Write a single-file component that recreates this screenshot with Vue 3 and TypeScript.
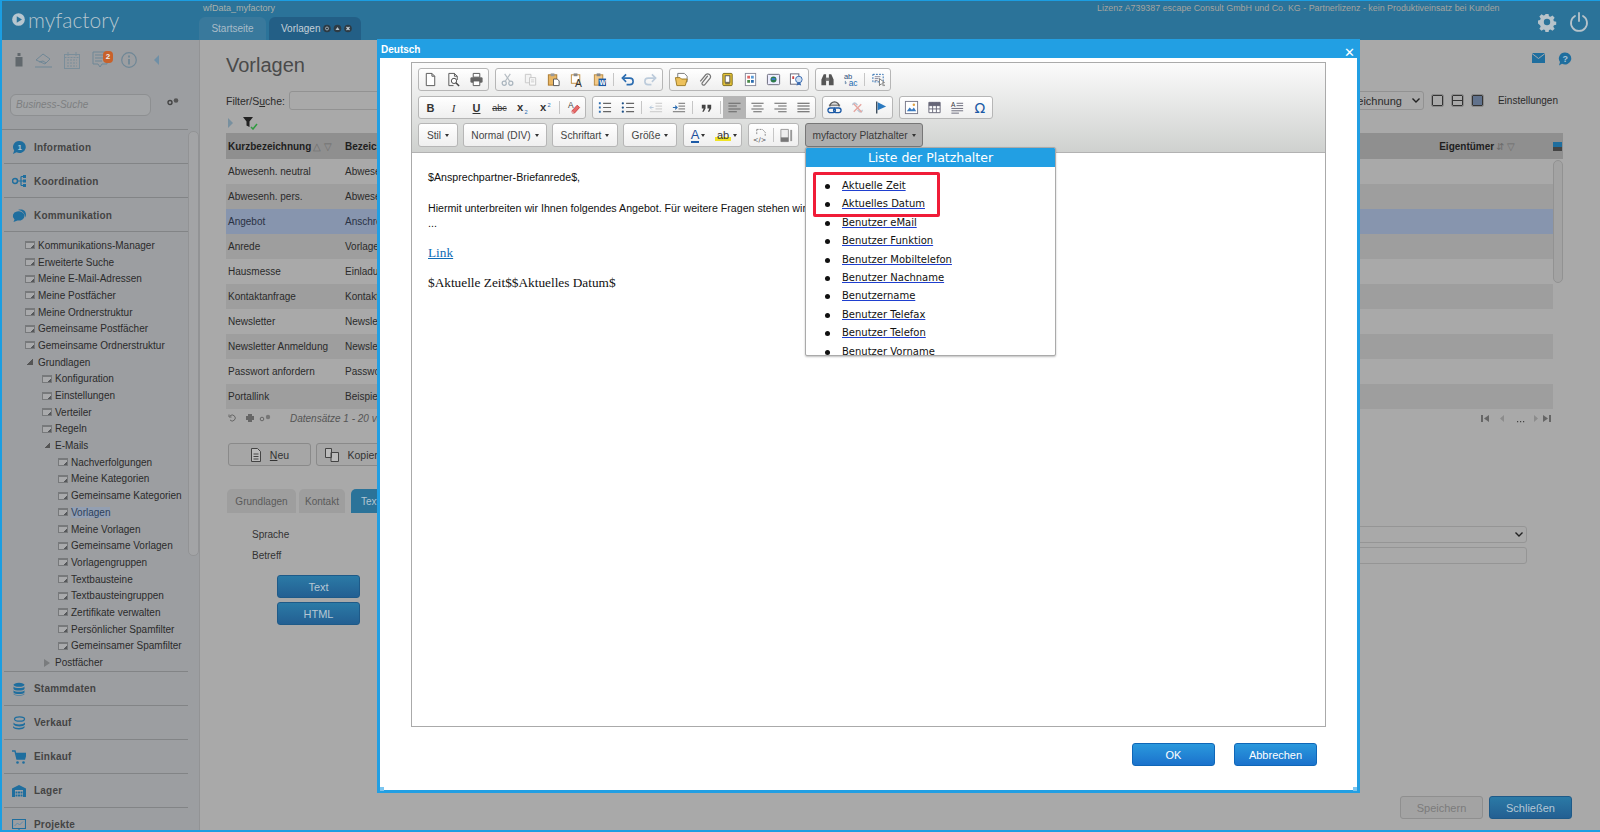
<script setup lang="ts">
type TreeItem = { label: string; level: number; kind?: "open" | "closed"; active?: boolean };

const sectionIcons: Record<string, string> = {
  Information: '<path d="M7.500 1a6.300 6 0 1 1-3 11.300L1 14l1.200-3.500A6 6 0 0 1 7.500 1z" fill="#1f6e9e"/><text x="5.500" y="10" font-size="8" font-family="Liberation Sans" fill="#a9c4d6">1</text>',
  Koordination: '<circle cx="3" cy="7" r="2.500" fill="none" stroke="#1f6e9e" stroke-width="1.500"/><path d="M5.500 7H9M9 2.500v9M9 2.500h2M9 7h2M9 11.500h2" stroke="#1f6e9e" stroke-width="1.200"/><path d="M11 1h3v3h-3zM11 5.500h3v3h-3zM11 10h3v3h-3z" fill="#1f6e9e"/>',
  Kommunikation: '<path d="M5 3.500a6 4.600 0 1 1 .5 9L1.500 14l1-2.500A5 4.600 0 0 1 5 3.500z" fill="#1f6e9e"/><path d="M6 2c4-1.500 8 .500 8 4.500 0 1-.3 2-1 3 .2-4-3-7-7-7.500z" fill="#1f6e9e"/>',
  Stammdaten: '<ellipse cx="7" cy="2.800" rx="5.500" ry="2" fill="#1f6e9e"/><path d="M1.500 4.500c1 2 10 2 11 0V7c-1 2-10 2-11 0zM1.500 8.200c1 2 10 2 11 0v2.300c-1 2-10 2-11 0zM1.500 11.500c1 2 10 2 11 0v.500c-1 2-10 2-11 0z" fill="#1f6e9e"/>',
  Verkauf: '<ellipse cx="7.500" cy="3" rx="5" ry="2.200" fill="none" stroke="#1f6e9e" stroke-width="1.300"/><path d="M1.500 6.500c1 2.500 10 2.500 11.500 0v2c-1 2.500-10 2.500-11.500 0zM1 10c1 2.500 10 2.500 11.500 0v1.500c-1 2.500-10 2.500-11.500 0z" fill="#1f6e9e"/>',
  Einkauf: '<path d="M0 1h3l2 8h7.500L14 3.500H4" fill="none" stroke="#1f6e9e" stroke-width="1.400"/><path d="M4 3.500h10l-1.500 5.500H5z" fill="#1f6e9e"/><circle cx="5.500" cy="12.500" r="1.300" fill="#1f6e9e"/><circle cx="11.500" cy="12.500" r="1.300" fill="#1f6e9e"/>',
  Lager: '<path d="M0 4.500L7 1l7 3.500V13H0z" fill="#1f6e9e"/><path d="M3 6h8v7H3z" fill="#a0a2a5"/><path d="M3.500 7.500h2v2h-2zM6 7.500h2v2H6zM8.500 7.500h2v2h-2zM3.500 10.500h2v2h-2zM6 10.500h2v2H6zM8.500 10.500h2v2h-2z" fill="#1f6e9e"/>',
  Projekte: '<path d="M.5 1.500h13v9H.5zM7 10.500v2.500M4.500 13.500h5" fill="none" stroke="#1f6e9e" stroke-width="1.100"/><path d="M2.500 8l3-3 2 2 3.500-3.500" fill="none" stroke="#5c8cad"/>',
};

const topSections = ["Information", "Koordination", "Kommunikation"];
const bottomSections = ["Stammdaten", "Verkauf", "Einkauf", "Lager", "Projekte"];

const tree: TreeItem[] = [
  { label: "Kommunikations-Manager", level: 1 },
  { label: "Erweiterte Suche", level: 1 },
  { label: "Meine E-Mail-Adressen", level: 1 },
  { label: "Meine Postfächer", level: 1 },
  { label: "Meine Ordnerstruktur", level: 1 },
  { label: "Gemeinsame Postfächer", level: 1 },
  { label: "Gemeinsame Ordnerstruktur", level: 1 },
  { label: "Grundlagen", level: 1, kind: "open" },
  { label: "Konfiguration", level: 2 },
  { label: "Einstellungen", level: 2 },
  { label: "Verteiler", level: 2 },
  { label: "Regeln", level: 2 },
  { label: "E-Mails", level: 2, kind: "open" },
  { label: "Nachverfolgungen", level: 3 },
  { label: "Meine Kategorien", level: 3 },
  { label: "Gemeinsame Kategorien", level: 3 },
  { label: "Vorlagen", level: 3, active: true },
  { label: "Meine Vorlagen", level: 3 },
  { label: "Gemeinsame Vorlagen", level: 3 },
  { label: "Vorlagengruppen", level: 3 },
  { label: "Textbausteine", level: 3 },
  { label: "Textbausteingruppen", level: 3 },
  { label: "Zertifikate verwalten", level: 3 },
  { label: "Persönlicher Spamfilter", level: 3 },
  { label: "Gemeinsamer Spamfilter", level: 3 },
  { label: "Postfächer", level: 2, kind: "closed" },
];

const rows = [
  ["Abwesenh. neutral", "Abwesenheit neutral"],
  ["Abwesenh. pers.", "Abwesenheit persönlich"],
  ["Angebot", "Anschreiben Angebot"],
  ["Anrede", "Vorlage Anrede"],
  ["Hausmesse", "Einladung Hausmesse"],
  ["Kontaktanfrage", "Kontaktanfrage"],
  ["Newsletter", "Newsletter"],
  ["Newsletter Anmeldung", "Newsletter Anmeldung"],
  ["Passwort anfordern", "Passwort anfordern"],
  ["Portallink", "Beispiel Portallink"],
];

const placeholders = [
  "Aktuelle Zeit",
  "Aktuelles Datum",
  "Benutzer eMail",
  "Benutzer Funktion",
  "Benutzer Mobiltelefon",
  "Benutzer Nachname",
  "Benutzername",
  "Benutzer Telefax",
  "Benutzer Telefon",
  "Benutzer Vorname",
];

// "|" is a separator, "=x" a text button, everything else an icon name
const toolbarRows: string[][][] = [
  [
    ["doc", "preview", "print"],
    ["cut", "copy", "paste", "pasteText", "pasteWord", "|", "undo", "redo"],
    ["template", "clip", "frame", "form", "image2", "seal"],
    ["find", "replace", "|", "select"],
  ],
  [
    ["=B", "=I", "=U", "=abc", "sub", "sup", "|", "eraser"],
    ["ol", "ul", "|", "outdent", "indent", "|", "quote", "|", "left", "center", "right", "justify"],
    ["link", "unlink", "flag"],
    ["picture", "table", "lines", "omega"],
  ],
];

const combos = [
  { label: "Stil", width: 40 },
  { label: "Normal (DIV)", width: 84 },
  { label: "Schriftart", width: 66 },
  { label: "Größe", width: 54 },
];

const icons: Record<string, string> = {
  doc: '<path d="M3.500 1.500h6l3 3v10h-9z M9.500 1.500v3h3" fill="#fff" stroke="#555"/>',
  preview: '<path d="M3 1.500h6l3 3v4M3 1.500v13h5M9 1.500v3h3" fill="none" stroke="#555"/><circle cx="8.500" cy="9.500" r="2.800" fill="#fff" stroke="#444"/><path d="M10.500 11.500l3.500 3.500" stroke="#444" stroke-width="1.600"/>',
  print: '<path d="M4.500 1.500h7v4h-7z" fill="#fff" stroke="#555"/><rect x="1.500" y="5.500" width="13" height="6" rx="1.500" fill="#666"/><path d="M4.500 9.500h7v5h-7z" fill="#fff" stroke="#555"/>',
  cut: '<circle cx="4.500" cy="12" r="2.200" fill="none" stroke="#a9b4bd" stroke-width="1.300"/><circle cx="11.500" cy="12" r="2.200" fill="none" stroke="#a9b4bd" stroke-width="1.300"/><path d="M5.500 10L11 2M10.500 10L5 2" stroke="#b5bcc2" stroke-width="1.200"/>',
  copy: '<path d="M2.500 2.500h6v9h-6z" fill="#f4f4f4" stroke="#c8c8c8"/><path d="M7 6h6.500v8H7z" fill="#fafafa" stroke="#c4c4c4"/><path d="M8.500 8.500h3.500M8.500 10.500h3.500" stroke="#ccc"/>',
  paste: '<rect x="2.500" y="3" width="9" height="11" fill="#e8b563" stroke="#a9772c"/><rect x="5" y="1.500" width="4" height="3" fill="#999"/><path d="M8 7.500h4l2 2v5H8z" fill="#fff" stroke="#555"/>',
  pasteText: '<rect x="2.500" y="3" width="9" height="9" fill="#fff" stroke="#c08b3b"/><rect x="5" y="1.500" width="4" height="3" fill="#888"/><text x="6.500" y="15.500" font-size="11" font-family="Liberation Sans" fill="#333">A</text>',
  pasteWord: '<rect x="2.500" y="3" width="9" height="11" fill="#f3c987" stroke="#b8893f"/><rect x="5" y="1.500" width="4" height="3" fill="#888"/><rect x="7" y="7" width="8" height="8" fill="#1c5aa6"/><text x="8" y="14" font-size="7" font-weight="700" font-family="Liberation Sans" fill="#fff">W</text>',
  undo: '<path d="M3.500 6.500h7a3.500 3.500 0 0 1 0 7H7" fill="none" stroke="#2b6cb0" stroke-width="1.700"/><path d="M6.500 2.500L2.500 6.500l4 4" fill="none" stroke="#2b6cb0" stroke-width="1.700"/>',
  redo: '<path d="M12.500 6.500h-7a3.500 3.500 0 0 0 0 7H9" fill="none" stroke="#bccbdb" stroke-width="1.700"/><path d="M9.500 2.500l4 4-4 4" fill="none" stroke="#bccbdb" stroke-width="1.700"/>',
  template: '<path d="M4 1.500h7l3 3v6H4z" fill="#fff" stroke="#777"/><path d="M1.500 6h5l1.500 1.500h6L12 14.500H3z" fill="#edc15c" stroke="#9c7a22"/>',
  clip: '<path d="M11.500 4L5.500 11.500a1.800 1.800 0 0 0 2.700 2.200L14 6.500a3 3 0 0 0-4.500-3.800L3.500 10" fill="none" stroke="#777" stroke-width="1.300"/>',
  frame: '<rect x="3" y="1.500" width="10" height="13" rx="1" fill="#e6c335" stroke="#7a6a1a"/><rect x="5.500" y="4" width="5" height="7" fill="#fff" stroke="#555"/><path d="M5.500 12.500h5" stroke="#555"/>',
  form: '<rect x="2.500" y="1.500" width="11" height="13" fill="#fff" stroke="#889"/><path d="M4.500 4h3v3h-3z" fill="#d66"/><path d="M8.500 4h3v3h-3z" fill="#5a9ad6"/><path d="M4.500 8.500h3v3h-3z" fill="#4a8a4a"/><path d="M8.500 8.500h3v3h-3z" fill="#2b6cb0"/>',
  image2: '<rect x="1.500" y="2.500" width="13" height="11" rx="1" fill="#eef" stroke="#667"/><circle cx="8" cy="8" r="3.200" fill="#2d7a4a"/><path d="M6 7.500h4" stroke="#3a7ad0" stroke-width="2"/>',
  seal: '<rect x="1.500" y="2" width="9" height="11" fill="#fff" stroke="#667"/><path d="M3.500 4.500h2v3h-2z" fill="#c44"/><circle cx="10.500" cy="8" r="3.500" fill="#cfe0f2" stroke="#3a6ab0"/><path d="M9 11l-1 3.500 2.500-1 2.500 1-1-3.500" fill="#3a6ab0"/>',
  find: '<path d="M1.500 14V8L4 2.500h2.500V14zM14.500 14V8L12 2.500H9.500V14z" fill="#555"/><path d="M6 6h4v3.500H6z" fill="#777"/>',
  replace: '<text x="1" y="7.500" font-size="8" font-family="Liberation Sans" fill="#2b4d7a">ab</text><text x="6" y="15" font-size="9" font-family="Liberation Sans" fill="#1c6ab0">ac</text><path d="M2.500 9.500v3l1.500-1" fill="none" stroke="#68a"/>',
  select: '<path d="M2 2.500h11v8H2z" fill="none" stroke="#2b6cb0" stroke-dasharray="2 1.300"/><path d="M4 5h6M4 7h4M4 9h3" stroke="#889"/><path d="M9 7l0 7.500 2-2 2.500 2.500 1-1-2.500-2.300 2.300-.5z" fill="#fff" stroke="#555" stroke-width=".8"/>',
  sub: '<text x="2" y="12" font-size="12" font-weight="700" font-family="Liberation Sans" fill="#333">x</text><text x="10" y="15" font-size="6" font-family="Liberation Sans" fill="#2b6cb0">2</text>',
  sup: '<text x="2" y="12" font-size="12" font-weight="700" font-family="Liberation Sans" fill="#333">x</text><text x="10" y="7" font-size="6" font-family="Liberation Sans" fill="#2b6cb0">2</text>',
  eraser: '<text x="2" y="8" font-size="9" font-family="Liberation Sans" fill="#444">A</text><path d="M6 12l6-6.500 2.500 2.500-5.500 6H7z" fill="#e66a6a" stroke="#c44"/><path d="M6 12l2.500 2.500" stroke="#eee"/>',
  ol: '<path d="M6.500 3.500H15M6.500 8H15M6.500 12.500H15" stroke="#666" stroke-width="1.300"/><path d="M2 2.500h2v2H2zM2 7h2v2H2zM2 11.500h2v2H2z" fill="#2b6cb0"/>',
  ul: '<path d="M6.500 3.500H15M6.500 8H15M6.500 12.500H15" stroke="#666" stroke-width="1.300"/><circle cx="3" cy="3.500" r="1.200" fill="#1c4f86"/><circle cx="3" cy="8" r="1.200" fill="#1c4f86"/><circle cx="3" cy="12.500" r="1.200" fill="#1c4f86"/>',
  outdent: '<path d="M8 3.500h7M8 6.500h7M8 9.500h7M2 12.500h13" stroke="#c5c5c5"/><path d="M6 8H2m2-2L2 8l2 2" fill="none" stroke="#b4c6da"/>',
  indent: '<path d="M8 3.500h7M8 6.500h7M8 9.500h7M2 12.500h13" stroke="#666"/><path d="M2 8h4M4.500 6L6.500 8l-2 2" fill="none" stroke="#2b6cb0" stroke-width="1.200"/>',
  quote: '<path d="M3 5h4v4l-2 3.500H3.500L5 9H3zM9 5h4v4l-2 3.500H9.500L11 9H9z" fill="#444"/>',
  left: '<path d="M1.500 3.500h13M1.500 6.500h9M1.500 9.500h13M1.500 12.500h9" stroke="#666" stroke-width="1.100"/>',
  center: '<path d="M1.500 3.500h13M3.500 6.500h9M1.500 9.500h13M3.500 12.500h9" stroke="#666" stroke-width="1.100"/>',
  right: '<path d="M1.500 3.500h13M5.500 6.500h9M1.500 9.500h13M5.500 12.500h9" stroke="#666" stroke-width="1.100"/>',
  justify: '<path d="M1.500 3.500h13M1.500 6.500h13M1.500 9.500h13M1.500 12.500h13" stroke="#555" stroke-width="1.100"/>',
  link: '<path d="M3 7a5 5 0 0 1 10 0" fill="#ddd" stroke="#555" stroke-width="1.200"/><path d="M2 5.500h12" stroke="#555"/><path d="M3.500 8.500h3a2.500 2.500 0 0 1 0 5h-3a2.500 2.500 0 0 1 0-5zM9.500 8.500h3a2.500 2.500 0 0 1 0 5h-3a2.500 2.500 0 0 1 0-5z" fill="none" stroke="#1c5aa6" stroke-width="1.400"/>',
  unlink: '<path d="M3 5.500a2 2 0 0 1 3-2l2 2M13 10.500a2 2 0 0 1-3 2l-2-2" fill="none" stroke="#b8c6d6" stroke-width="1.500"/><path d="M4 4l8.500 9M12 4.500l-8 8" stroke="#e6a6a0" stroke-width="1.500"/>',
  flag: '<path d="M4 1.500v13" stroke="#234" stroke-width="1.300"/><path d="M5 2.500l9 4.500-9 4z" fill="#2b7ac0"/>',
  picture: '<rect x="1.500" y="1.500" width="13" height="13" fill="#fff" stroke="#778"/><path d="M3 12l3-4 2.500 2.500L10.500 8l2.500 4z" fill="#3a7ac0"/><circle cx="10.500" cy="5" r="1.300" fill="#e0a040"/>',
  table: '<path d="M2 2.500h12v11H2zM2 6h12M2 9.500h12M6 2.500v11M10 2.500v11" fill="#fff" stroke="#667"/><path d="M2 2.500h12V6H2z" fill="#667"/>',
  lines: '<text x="1" y="7" font-size="7" font-family="Liberation Sans" fill="#333">A</text><path d="M7 3.500h7M7 6h7M1.500 9h12.500M1.500 11.500h12.500M1.500 14h8" stroke="#667"/>',
  omega: '<text x="1.500" y="14" font-size="15" font-family="DejaVu Sans" fill="#1c5aa6">Ω</text>',
};
</script>

<template>
  <div class="app">
    <header class="topbar">
      <div class="logo">
        <svg width="13" height="13" viewBox="0 0 15 15"><circle cx="7.500" cy="7.500" r="7.300" fill="#b7c6cf" /><path d="M5.500 3.800l6 3.700-6 3.700z" fill="#2b7399" /></svg>
        <span>myfactory</span>
      </div>
      <div class="top-center">
        <div class="db-name">wfData_myfactory</div>
        <div class="tabs">
          <div class="tab">Startseite</div>
          <div class="tab current">
            Vorlagen
            <svg width="29" height="9" viewBox="0 0 29 9">
              <circle cx="4" cy="4.500" r="3.800" fill="#2e3b44" /><path d="M2.500 4.500a1.500 1.500 0 0 1 3 0M5.500 4.500a1.500 1.500 0 0 1-3 0" fill="none" stroke="#b9c4cb" stroke-width=".8" />
              <circle cx="14.500" cy="4.500" r="3.800" fill="#2e3b44" /><path d="M12.500 6l2-3 2 3z" fill="#b9c4cb" />
              <circle cx="25" cy="4.500" r="3.800" fill="#2e3b44" /><path d="M23.500 3l3 3M26.500 3l-3 3" stroke="#c6d0d6" stroke-width="1.100" />
            </svg>
          </div>
        </div>
      </div>
      <div class="licence">Lizenz A739387 escape Consult GmbH und Co. KG - Partnerlizenz - kein Produktiveinsatz bei Kunden</div>
      <div class="top-actions">
        <svg width="20" height="20" viewBox="0 0 20 20"><path d="M8.300 1h3.400l.5 2.600 1.700.7 2.200-1.500 2.400 2.400-1.500 2.200.7 1.700 2.600.5-.1 3.400-2.500.5-.7 1.700 1.500 2.200-2.400 2.400-2.200-1.500-1.700.7-.5 2.600H8.300l-.5-2.600-1.700-.7-2.200 1.500-2.400-2.400 1.500-2.200-.7-1.700L0 11.600V8.200l2.300-.5.700-1.700-1.500-2.200 2.400-2.400 2.200 1.500 1.700-.7z" transform="translate(1 1) scale(.9)" fill="#b7c3ca" /><circle cx="10" cy="10" r="3.200" fill="#2b7399" /></svg>
        <svg width="20" height="20" viewBox="0 0 20 20"><path d="M6 4a8 8 0 1 0 8 0M10 1v8" fill="none" stroke="#b7c3ca" stroke-width="1.800" stroke-linecap="round" /></svg>
      </div>
    </header>

    <div class="page">
      <aside class="sidebar">
        <div class="quick">
          <svg width="8" height="14" viewBox="0 0 8 14"><path d="M2.500 0h3v3h-3zM.5 4h7v9.500h-7z" fill="#61686d" /></svg>
          <svg width="17" height="16" viewBox="0 0 17 16"><path d="M1 8l7-6 7 5-5 5zM4 10l4-1 3 2M0 15h17" fill="none" stroke="#6f8796" /></svg>
          <svg width="16" height="17" viewBox="0 0 16 17"><rect x=".5" y="2.500" width="15" height="14" fill="none" stroke="#7b8e9a" /><path d="M.5 5.500h15M4 0v4M12 0v4M3 8h10M3 11h10M3 14h10" stroke="#7b8e9a" stroke-dasharray="2 1" /></svg>
          <span class="note">
            <svg width="17" height="18" viewBox="0 0 17 18"><path d="M1 1h14v12h-5l-2 3-2-3H1zM3 4h10M3 7h10M3 10h7" fill="none" stroke="#6f8796" /></svg>
            <b>2</b>
          </span>
          <svg width="16" height="16" viewBox="0 0 16 16"><circle cx="8" cy="8" r="7.300" fill="none" stroke="#6f8796" stroke-width="1.200" /><path d="M8 3.500v2M8 7v5.500" stroke="#6f8796" stroke-width="1.800" /></svg>
          <i class="collapse"></i>
        </div>
        <div class="search-row">
          <div class="search">Business-Suche</div>
          <svg width="12" height="9" viewBox="0 0 12 9"><circle cx="3" cy="5.500" r="2" fill="none" stroke="#444" stroke-width="1.400" /><circle cx="9" cy="3.500" r="2.300" fill="#555" /></svg>
        </div>
        <div class="nav">
          <div class="nav-list">
            <div v-for="s in topSections" :key="s" class="section">
              <svg width="14" height="14" viewBox="0 0 14 14" v-html="sectionIcons[s]"></svg>
              {{ s }}
            </div>
            <div class="tree">
              <div v-for="t in tree" :key="t.label" class="tree-item" :class="'lv' + t.level">
                <i v-if="t.kind === 'open'" class="arrow-open"></i>
                <i v-else-if="t.kind === 'closed'" class="arrow-closed"></i>
                <i v-else class="win"></i>
                <span :class="{ active: t.active }">{{ t.label }}</span>
              </div>
            </div>
            <div v-for="s in bottomSections" :key="s" class="section">
              <svg width="14" height="14" viewBox="0 0 14 14" v-html="sectionIcons[s]"></svg>
              {{ s }}
            </div>
          </div>
          <div class="nav-scroll"><div class="nav-thumb"></div></div>
        </div>
      </aside>

      <main class="main">
        <h1>Vorlagen</h1>
        <div class="filter-row">
          <label>Filter/S<u>u</u>che:</label>
          <div class="filter-input"></div>
          <div class="view-select">
            Bezeichnung
            <svg width="8" height="5" viewBox="0 0 8 5"><path d="M.5.500L4 4 7.500.5" fill="none" stroke="#222" stroke-width="1.400" /></svg>
          </div>
          <i class="view-btn"></i><i class="view-btn mid"></i><i class="view-btn full"></i>
          <span class="settings">Einstellungen</span>
        </div>
        <div class="filter-icons">
          <i class="play"></i>
          <svg width="15" height="13" viewBox="0 0 15 13"><path d="M0 0h10L6.500 4.500V10l-3-1.500v-4z" fill="#222" /><path d="M8 10l2 2 4-5" fill="none" stroke="#2f9b3f" stroke-width="1.500" /></svg>
        </div>
        <div class="table-wrap">
          <div class="table">
            <div class="row head">
              <div class="cell first">Kurzbezeichnung<em>△ ▽</em></div>
              <div class="cell">Bezeichnung</div>
              <div class="cell owner">Eigentümer<em>⇵ ▽</em></div>
              <div class="cell pin"></div>
            </div>
            <div v-for="(r, i) in rows" :key="r[0]" class="row" :class="{ even: i % 2 === 1, selected: r[0] === 'Angebot' }">
              <div class="cell first">{{ r[0] }}</div>
              <div class="cell">{{ r[1] }}</div>
            </div>
          </div>
          <div class="table-scroll"></div>
        </div>
        <div class="pager">
          <svg width="44" height="10" viewBox="0 0 44 10"><path d="M2 3a3 3 0 1 1 0 4M1 1.500V4h2.500" fill="none" stroke="#666" /><path d="M18 3h8v4h-8zM20 1h4v2h-4zM20 7h4v2h-4z" fill="#666" /><circle cx="34" cy="6" r="1.800" fill="none" stroke="#666" /><circle cx="40" cy="4" r="2.200" fill="#777" /></svg>
          <span class="count">Datensätze 1 - 20 von 26</span>
          <span class="pages">
            <svg width="72" height="9" viewBox="0 0 72 9">
              <path d="M1 1h2v7H1zM9 1v7L4 4.500z" fill="#666" />
              <path d="M24 1v7l-4-3.500z" fill="#8c8c8c" />
              <path d="M37 7h1.200v1.200H37zM40 7h1.200v1.200H40zM43 7h1.200v1.200H43z" fill="#444" />
              <path d="M54 1v7l4-3.500z" fill="#8c8c8c" />
              <path d="M63 1v7l5-3.500zM69 1h2v7h-2z" fill="#666" />
            </svg>
          </span>
        </div>
        <div class="actions">
          <button class="grey-btn"><svg width="12" height="14" viewBox="0 0 12 14"><path d="M1.500.5h6l3 3v10h-9zM3.500 6h5M3.500 8.500h5M3.500 11h5" fill="#bbb" stroke="#444" /></svg><span><u>N</u>eu</span></button>
          <button class="grey-btn"><svg width="14" height="14" viewBox="0 0 14 14"><path d="M.5.500h6v9h-6zM6 4.500h7.500v9H6z" fill="#bbb" stroke="#444" /></svg><span>Kopieren</span></button>
        </div>
        <div class="sub-tabs">
          <div class="sub-tab">Grundlagen</div>
          <div class="sub-tab narrow">Kontakt</div>
          <div class="sub-tab on">Text</div>
        </div>
        <div class="form-row">
          <span>Sprache</span>
          <div class="form-field">
            <svg width="8" height="5" viewBox="0 0 8 5"><path d="M.5.500L4 4 7.500.5" fill="none" stroke="#222" stroke-width="1.400" /></svg>
          </div>
        </div>
        <div class="form-row">
          <span>Betreff</span>
          <div class="form-field"></div>
        </div>
        <button class="blue-btn dim first-blue">Text</button>
        <button class="blue-btn dim html">HTML</button>
        <div class="footer">
          <button class="blue-btn off">Speichern</button>
          <button class="blue-btn dim">Schließen</button>
        </div>
      </main>
    </div>

    <svg class="mail" width="13" height="10" viewBox="0 0 13 10"><path d="M0 0h13v10H0z" fill="#1f6e9e" /><path d="M0 .5l6.500 5 6.500-5" fill="none" stroke="#a9a9a9" /></svg>
    <svg class="help" width="14" height="14" viewBox="0 0 14 14"><path d="M7 .5a6.300 6 0 1 1-3 11.300L1 13.500l1-3.500A6 6 0 0 1 7 .5z" fill="#1f6e9e" /><text x="4.500" y="10" font-size="9" font-weight="700" font-family="Liberation Sans" fill="#a9c4d6">?</text></svg>

    <section class="modal">
      <div class="modal-title">Deutsch<span class="modal-x">✕</span></div>
      <div class="editor-wrap">
        <div class="editor">
          <div class="toolbar">
            <div v-for="(row, ri) in toolbarRows" :key="ri" class="tb-row">
              <div v-for="(group, gi) in row" :key="gi" class="tb-group">
                <template v-for="(item, ii) in group" :key="ii">
                  <i v-if="item === '|'" class="tb-sep"></i>
                  <span v-else-if="item[0] === '='" class="tb-btn tb-text" :class="'t-' + item.slice(1)">{{ item.slice(1) }}</span>
                  <span v-else class="tb-btn" :class="{ pressed: item === 'left' }">
                    <svg width="16" height="16" viewBox="0 0 16 16" v-html="icons[item]"></svg>
                  </span>
                </template>
              </div>
            </div>
            <div class="tb-row third">
              <div v-for="c in combos" :key="c.label" class="combo" :style="{ width: c.width + 'px' }">{{ c.label }}<i class="caret"></i></div>
              <div class="tb-group color">
                <span class="tb-btn wide"><span class="fc">A</span><i class="caret"></i></span>
                <span class="tb-btn wide"><span class="bc">ab</span><i class="caret"></i></span>
              </div>
              <div class="tb-group tools">
                <span class="tb-btn">
                  <svg width="16" height="16" viewBox="0 0 16 16"><path d="M4 1.500h6l3 3v4M4 1.500v5" fill="none" stroke="#888" stroke-dasharray="2 1" /><text x="0" y="15" font-size="7" font-family="DejaVu Sans" fill="#444">&lt;/&gt;</text></svg>
                </span>
                <i class="tb-sep"></i>
                <span class="tb-btn">
                  <svg width="16" height="16" viewBox="0 0 16 16"><path d="M2 1.500h8v13H2z" fill="#eee" stroke="#999" /><path d="M2 10h8v4.500H2z" fill="#777" /><path d="M13 2v12" stroke="#999" stroke-width="2" /></svg>
                </span>
              </div>
              <div class="combo placeholder-combo">myfactory Platzhalter<i class="caret"></i></div>
            </div>
          </div>
          <div class="content">
            <p class="sans">$Ansprechpartner-Briefanrede$,</p>
            <p class="sans second">Hiermit unterbreiten wir Ihnen folgendes Angebot. Für weitere Fragen stehen wir Ihnen gerne zur Verfügung.</p>
            <p class="sans dots">...</p>
            <p class="serif link-line"><a>Link</a></p>
            <p class="serif">$Aktuelle Zeit$$Aktuelles Datum$</p>
          </div>
        </div>
        <div class="placeholder-menu">
          <div class="menu-title">Liste der Platzhalter</div>
          <ul>
            <li v-for="p in placeholders" :key="p"><a>{{ p }}</a></li>
          </ul>
          <div class="highlight"></div>
        </div>
      </div>
      <div class="modal-actions">
        <button class="blue-btn">OK</button>
        <button class="blue-btn">Abbrechen</button>
      </div>
      <i class="corner left-corner"></i>
      <i class="corner right-corner"></i>
    </section>
  </div>
</template>

<style>
html,
body {
  margin: 0;
  background: #a9a9a9;
}
</style>

<style scoped>
.app {
  position: relative;
  width: 1600px;
  height: 832px;
  overflow: hidden;
  box-sizing: border-box;
  display: flex;
  flex-direction: column;
  border-top: 1px solid #1b9ee2;
  border-left: 2px solid #1b9ee2;
  border-bottom: 2px solid #1b9ee2;
  font-family: "Liberation Sans", Arial, sans-serif;
  background: #a9a9a9;
  color: #2b2b2b;
}

.topbar {
  height: 39px;
  flex: none;
  display: flex;
  background: #2b7399;
  position: relative;
}

.logo {
  width: 197px;
  flex: none;
  display: flex;
  align-items: center;
  gap: 3px;
  padding: 0 0 3px 10px;
  box-sizing: border-box;
  color: #b7c6cf;
  font: 300 21px/33px Lato, sans-serif;
}

.top-center {
  display: flex;
  flex-direction: column;
  width: 300px;
}

.db-name {
  height: 16px;
  padding-left: 4px;
  color: #a9b0ac;
  font-size: 9px;
  line-height: 15px;
}

.tabs {
  display: flex;
  gap: 3px;
  height: 23px;
}

.tab {
  width: 67px;
  box-sizing: border-box;
  background: #39799c;
  border-radius: 6px 6px 0 0;
  color: #a9bcc8;
  font-size: 10px;
  line-height: 23px;
  text-align: center;
}

.tab.current {
  width: 92px;
  background: #235f86;
  color: #c4d0d8;
  text-align: left;
  padding-left: 12px;
  display: flex;
  align-items: center;
  gap: 3px;
}

.licence {
  position: absolute;
  left: 1095px;
  top: 1px;
  color: #a5a39f;
  font-size: 8.900px;
  line-height: 12px;
  white-space: nowrap;
}

.top-actions {
  margin-left: auto;
  padding-right: 11px;
  display: flex;
  align-items: center;
  gap: 12px;
  padding-top: 3px;
}

.page {
  flex: 1;
  display: flex;
  min-height: 0;
}

.sidebar {
  width: 197px;
  flex: none;
  background: #9c9ea1;
  border-right: 1px solid #929395;
  display: flex;
  flex-direction: column;
  overflow: hidden;
}

.quick {
  height: 40px;
  display: flex;
  align-items: center;
  gap: 12px;
  padding: 0 0 0 13px;
}

.note {
  position: relative;
  display: flex;
}

.note b {
  position: absolute;
  left: 11px;
  top: 0;
  width: 10px;
  height: 12px;
  background: #c8612a;
  border-radius: 4px;
  color: #eee;
  font-size: 8px;
  line-height: 12px;
  text-align: center;
}

.collapse {
  border: 5px solid transparent;
  border-right: 5px solid #6f8fa6;
  border-left: 0;
  margin-left: 5px;
}

.search-row {
  height: 49px;
  display: flex;
  align-items: flex-start;
  gap: 16px;
  padding: 14px 0 0 8px;
  box-sizing: border-box;
}

.search {
  width: 141px;
  height: 22px;
  box-sizing: border-box;
  border: 1px solid #8d8f91;
  border-radius: 6px;
  background: #a3a5a7;
  color: #7d7f81;
  padding-left: 5px;
  font-size: 10px;
  font-style: italic;
  line-height: 20px;
}

.search-row svg {
  margin-top: 3px;
}

.nav {
  flex: 1;
  display: flex;
  min-height: 0;
}

.nav-list {
  width: 186px;
  flex: none;
  padding-left: 2px;
  box-sizing: border-box;
  overflow: hidden;
  border-top: 1px solid #828486;
}

.section {
  height: 34px;
  box-sizing: border-box;
  border-bottom: 1px solid #828486;
  display: flex;
  align-items: center;
  gap: 8px;
  padding: 1px 0 0 8px;
  color: #444;
  font-size: 10px;
  font-weight: 700;
  letter-spacing: 0.2px;
}

.tree {
  padding-top: 5px;
  border-bottom: 1px solid #828486;
}

.tree-item {
  height: 16.700px;
  display: flex;
  align-items: center;
  gap: 3px;
  color: #2b2b2b;
  font-size: 10px;
  white-space: nowrap;
}

.lv1 {
  padding-left: 21px;
}

.lv2 {
  padding-left: 38px;
}

.lv3 {
  padding-left: 54px;
}

.win {
  width: 8px;
  height: 5px;
  flex: none;
  border: 1px solid #77797b;
  border-top-width: 2px;
  background: linear-gradient(135deg, #a9aaac 70%, #55575a 70%);
}

.arrow-open {
  width: 10px;
  height: 7px;
  flex: none;
  background: linear-gradient(135deg, transparent 50%, #555 50%);
  background-size: 6px 6px;
  background-repeat: no-repeat;
  background-position: 2px 0;
}

.arrow-closed {
  width: 0;
  height: 0;
  flex: none;
  margin-left: 2px;
  margin-right: 2px;
  border: 4px solid transparent;
  border-left: 6px solid #7a7c7e;
  border-right: 0;
}

.active {
  color: #2d3f5c;
  background: #939fb2;
}

.nav-scroll {
  flex: 1;
  padding-top: 2px;
}

.nav-thumb {
  width: 9px;
  height: 423px;
  background: #a3a4a6;
  border: 1px solid #929395;
  border-radius: 5px;
}

.main {
  flex: 1;
  min-width: 0;
  display: flex;
  flex-direction: column;
  padding: 0 47px 0 26px;
  overflow: hidden;
}

h1 {
  margin: 0;
  height: 50px;
  color: #4a4a4a;
  font-size: 20px;
  font-weight: 400;
  line-height: 50px;
}

.filter-row {
  height: 19px;
  margin-top: 1px;
  display: flex;
  align-items: center;
  font-size: 10.500px;
}

.filter-row label {
  width: 63px;
}

.filter-input {
  width: 200px;
  height: 17px;
  border: 1px solid #929292;
  border-radius: 3px;
}

.view-select {
  margin-left: auto;
  width: 120px;
  height: 19px;
  box-sizing: border-box;
  border: 1px solid #929292;
  border-radius: 3px;
  padding-right: 3px;
  display: flex;
  align-items: center;
  justify-content: flex-end;
  gap: 10px;
  font-size: 11px;
}

.view-btn {
  width: 9px;
  height: 9px;
  margin-left: 9px;
  border: 1px solid #333;
  outline: 1px solid #8a8a8a;
  border-radius: 1px;
  background: #a9a9a9;
}

.view-btn:first-of-type {
  margin-left: 8px;
}

.view-btn.mid {
  background: linear-gradient(#a9a9a9 40%, #333 40%, #333 55%, #a9a9a9 55%);
}

.view-btn.full {
  background: #61728c;
}

.settings {
  margin-left: 15px;
  margin-right: -5px;
  font-size: 10px;
}

.filter-icons {
  height: 23px;
  box-sizing: border-box;
  display: flex;
  align-items: center;
  gap: 10px;
  padding: 3px 0 0 2px;
}

.play {
  border: 5px solid transparent;
  border-left: 5px solid #78909f;
  border-right: 0;
}

.table-wrap {
  display: flex;
  margin-right: -10px;
}

.table {
  flex: 1;
  font-size: 10px;
}

.row {
  height: 25px;
  display: flex;
  align-items: center;
  padding-left: 2px;
}

.row.head {
  height: 26px;
  margin-right: -10px;
  background: #8f8f8f;
  font-weight: 700;
  color: #1e1e1e;
}

.row.even {
  background: #9e9e9e;
}

.row.selected {
  background: #8795ae;
  color: #2a3244;
}

.cell {
  white-space: nowrap;
}

.cell.first {
  width: 117px;
  flex: none;
}

.cell em {
  margin-left: 2px;
  color: #6c6c6c;
  font-style: normal;
  font-size: 10px;
  font-weight: 400;
}

.cell.owner {
  margin-left: auto;
  margin-right: 38px;
}

.cell.pin {
  width: 9px;
  height: 9px;
  margin-right: 1px;
  background: linear-gradient(#1f6e9e 60%, #444 60%);
}

.table-scroll {
  width: 10px;
  height: 123px;
  margin-top: 27px;
  flex: none;
  box-sizing: border-box;
  background: #a3a3a3;
  border: 1px solid #929292;
  border-radius: 5px;
}

.pager {
  height: 18px;
  box-sizing: border-box;
  padding: 0 0 0 2px;
  display: flex;
  align-items: center;
  gap: 18px;
  font-size: 10px;
  color: #555;
}

.count {
  font-style: italic;
}

.pages {
  margin-left: auto;
  margin-right: 1px;
  display: flex;
}

.actions {
  margin-top: 16px;
  display: flex;
  gap: 5px;
  padding-left: 2px;
}

.grey-btn {
  width: 83px;
  height: 23px;
  flex: none;
  display: flex;
  align-items: center;
  justify-content: center;
  gap: 8px;
  border: 1px solid #8a8a8a;
  border-radius: 3px;
  background: #a6a6a6;
  color: #333;
  font: 10.500px "Liberation Sans", Arial, sans-serif;
  padding: 0;
}

.sub-tabs {
  margin-top: 23px;
  height: 24px;
  display: flex;
  gap: 3px;
  padding-left: 1px;
}

.sub-tab {
  width: 69px;
  background: #9e9e9e;
  border-radius: 5px 5px 0 0;
  color: #5a5a5a;
  font-size: 10px;
  line-height: 25px;
  text-align: center;
}

.sub-tab.narrow {
  width: 46px;
}

.sub-tab.on {
  margin-left: 3px;
  width: 60px;
  box-sizing: border-box;
  padding-left: 10px;
  background: #2b7399;
  color: #b4c7d3;
  text-align: left;
}

.form-row {
  height: 21px;
  display: flex;
  align-items: center;
  padding-left: 26px;
  font-size: 10px;
  color: #333;
  position: relative;
}

.sub-tabs + .form-row {
  margin-top: 11px;
}

.form-field {
  position: absolute;
  left: 1000px;
  right: 26px;
  top: 2px;
  height: 17px;
  box-sizing: border-box;
  border: 1px solid #959595;
  border-radius: 3px;
  display: flex;
  align-items: center;
  justify-content: flex-end;
  padding-right: 3px;
}

.blue-btn {
  width: 83px;
  height: 23px;
  flex: none;
  box-sizing: border-box;
  padding: 0;
  border: 1px solid #0f67b8;
  border-radius: 3px;
  background: linear-gradient(#2a99dd, #1b72cc);
  color: #fff;
  font: 11px "Liberation Sans", Arial, sans-serif;
}

.blue-btn.dim {
  border-color: #1e5a88;
  background: linear-gradient(#2b7aa6, #235f92);
  color: #b6c7d4;
}

.blue-btn.off {
  border-color: #8f8f8f;
  background: #a3a3a3;
  color: #7b7b7b;
}

.first-blue {
  margin: 9px 0 0 51px;
}

.html {
  margin: 4px 0 0 51px;
}

.footer {
  margin-top: auto;
  margin-right: -19px;
  margin-bottom: 11px;
  display: flex;
  justify-content: flex-end;
  gap: 6px;
}

.mail {
  position: absolute;
  left: 1530px;
  top: 52px;
}

.help {
  position: absolute;
  left: 1556px;
  top: 51px;
}

.modal {
  position: absolute;
  left: 375px;
  top: 38px;
  width: 983px;
  height: 754px;
  box-sizing: border-box;
  border: 3px solid #229fe3;
  border-top-width: 1px;
  background: #fff;
  display: flex;
  flex-direction: column;
}

.modal-title {
  height: 18px;
  flex: none;
  margin: 0 -3px;
  padding-left: 4px;
  background: #229fe3;
  color: #fff;
  font-size: 10px;
  font-weight: 700;
  line-height: 20px;
  position: relative;
}

.modal-x {
  position: absolute;
  right: 5px;
  top: 6px;
  font-family: "DejaVu Sans", sans-serif;
  font-size: 13px;
  font-weight: 700;
  line-height: 14px;
}

.editor-wrap {
  position: relative;
  padding: 4px 0 0 31px;
}

.editor {
  width: 915px;
  height: 665px;
  box-sizing: border-box;
  border: 1px solid #aaa;
  display: flex;
  flex-direction: column;
}

.toolbar {
  height: 90px;
  flex: none;
  box-sizing: border-box;
  padding: 5px 0 0 6px;
  background: linear-gradient(#fbfbfb, #cfd1cf);
  border-bottom: 1px solid #b2b2b2;
  display: flex;
  flex-direction: column;
  gap: 5px;
}

.tb-row {
  display: flex;
  gap: 6px;
  height: 23px;
}

.tb-row.third {
  height: 24px;
  gap: 5px;
  margin-top: -1px;
}

.tb-group {
  display: flex;
  align-items: stretch;
  box-sizing: border-box;
  border: 1px solid #b6b6b6;
  border-radius: 3px;
  background: linear-gradient(#fff, #efefef);
}

.tb-btn {
  width: 23px;
  display: flex;
  align-items: center;
  justify-content: center;
  color: #333;
  font-size: 11px;
}

.tb-btn svg {
  width: 15px;
  height: 15px;
}

.tb-btn.pressed {
  background: #b5b5b5;
}

.tb-text {
  font-family: "Liberation Sans", Arial, sans-serif;
}

.t-B {
  font-weight: 700;
}

.t-I {
  font-family: "Liberation Serif", serif;
  font-style: italic;
}

.t-U {
  text-decoration: underline;
  font-weight: 700;
}

.t-abc {
  text-decoration: line-through;
  font-size: 9px;
}

.tb-sep {
  width: 1px;
  margin: 4px 2px;
  background: #c6c6c6;
}

.combo {
  box-sizing: border-box;
  border: 1px solid #b6b6b6;
  border-radius: 3px;
  background: linear-gradient(#fff, #efefef);
  display: flex;
  align-items: center;
  justify-content: center;
  gap: 4px;
  color: #444;
  font-size: 10.200px;
  white-space: nowrap;
}

.caret {
  border: 2.500px solid transparent;
  border-top: 3px solid #333;
  border-bottom: 0;
}

.color {
  width: 59px;
  margin-left: 1px;
}

.tb-btn.wide {
  width: 28px;
  gap: 2px;
}

.fc {
  color: #1c4f9c;
  border-bottom: 2px solid #1c5aa6;
  font-size: 13px;
  line-height: 13px;
}

.bc {
  color: #333;
  background: linear-gradient(transparent 70%, #f0e424 70%);
  padding: 0 2px;
}

.tools {
  width: 51px;
  margin-left: 1px;
}

.placeholder-combo {
  width: 118px;
  margin-left: 1px;
  border-color: #777;
  background: #aeaeae;
  color: #3a3a3a;
}

.content {
  flex: 1;
  padding: 17px 0 0 16px;
  overflow: hidden;
}

.content p {
  margin: 0;
}

.content .sans {
  font-size: 10.650px;
  color: #111;
  line-height: 14px;
  white-space: nowrap;
}

.content .second {
  margin-top: 17px;
}

.content .dots {
  margin-top: 1px;
}

.content .serif {
  font-family: "Liberation Serif", serif;
  font-size: 13.300px;
  line-height: 18px;
  margin-top: 12px;
  color: #111;
}

.content .link-line {
  margin-top: 14px;
}

.serif a {
  color: #0f6cb6;
  text-decoration: underline;
}

.placeholder-menu {
  position: absolute;
  left: 425px;
  top: 89px;
  width: 251px;
  height: 209px;
  box-sizing: border-box;
  border: 1px solid #aaa;
  border-radius: 2px;
  background: #fff;
  overflow: hidden;
  box-shadow: 0 1px 2px rgba(0, 0, 0, 0.25);
}

.menu-title {
  height: 19px;
  background: #229fe3;
  color: #fff;
  font: 12.500px/19px "DejaVu Sans", sans-serif;
  text-align: center;
}

.placeholder-menu ul {
  margin: 0;
  padding: 10px 0 0 36px;
  list-style: none;
  color: #111;
  font: 10px/18.400px "DejaVu Sans", sans-serif;
}

.placeholder-menu li {
  position: relative;
  height: 18.400px;
}

.placeholder-menu li::before {
  content: "";
  position: absolute;
  left: -17px;
  top: 7px;
  width: 5px;
  height: 5px;
  border-radius: 50%;
  background: #111;
}

.placeholder-menu a {
  color: #111;
  text-decoration: underline;
  text-decoration-color: #1f3fd0;
}

.highlight {
  position: absolute;
  left: 7px;
  top: 24px;
  width: 127px;
  height: 45px;
  box-sizing: border-box;
  border: 3px solid #f01c38;
  border-radius: 2px;
}

.modal-actions {
  display: flex;
  justify-content: flex-end;
  gap: 19px;
  padding: 16px 40px 0 0;
}

.corner {
  position: absolute;
  bottom: -1px;
  width: 4px;
  height: 4px;
  background: #7cc6f0;
}

.left-corner {
  left: 0;
}

.right-corner {
  right: 0;
}
</style>
